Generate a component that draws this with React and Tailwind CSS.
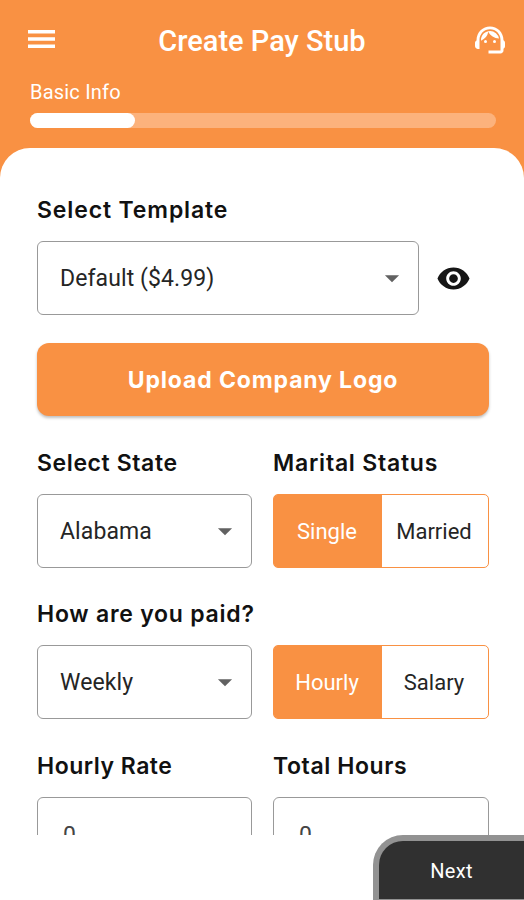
import React, { useState } from "react";
import { MdArrowDropDown, MdSupportAgent, MdVisibility } from "react-icons/md";

const MenuIcon = () => (
  <svg viewBox="0 0 27 18" className="mb-[2px] h-[18px] w-[27px]">
    <path
      d="M0 1.75h27M0 9h27M0 16.25h27"
      stroke="currentColor"
      strokeWidth="3.3"
    />
  </svg>
);

const Label = ({ children, className = "" }) => (
  <div
    className={`h-8 font-['Inter',sans-serif] text-[23px] leading-8 font-semibold whitespace-nowrap text-[#111] ${className}`}
  >
    {children}
  </div>
);

const SelectBox = ({ value, className = "" }) => (
  <button
    className={`flex h-[74px] items-center justify-between rounded-md border border-[#999] pr-[9px] pl-[22px] text-[23px] text-[#252525] ${className}`}
  >
    <span className="pt-0.5 tracking-[0.1px]">{value}</span>
    <MdArrowDropDown className="mb-px size-[34px] text-[#616161]" />
  </button>
);

const Toggle = ({ options, value, onChange }) => (
  <div className="flex h-[74px] rounded-[5px] border border-[#f99143] text-[22px]">
    {options.map((option) => (
      <button
        key={option}
        onClick={() => onChange(option)}
        className={
          option === value
            ? "w-[108px] rounded-l-[3px] bg-[#f99143] pr-0.5 text-white"
            : "flex-1 pr-0.5 text-[#252525]"
        }
      >
        {option}
      </button>
    ))}
  </div>
);

const App = () => {
  const [status, setStatus] = useState("Single");
  const [payType, setPayType] = useState("Hourly");

  return (
    <div className="flex h-[900px] w-[524px] flex-col overflow-hidden bg-white font-['Roboto',sans-serif]">
      <header className="h-[180px] shrink-0 bg-[#f99143] text-white">
        <div className="flex h-20 items-center justify-between pr-4 pl-7">
          <MenuIcon />
          <h1 className="mr-[3px] pt-[3px] text-[29px] font-medium">
            Create Pay Stub
          </h1>
          <MdSupportAgent className="mb-px size-9" />
        </div>
        <div className="pr-7 pl-[30px]">
          <p className="h-[33px] text-[20px] leading-6 tracking-[0.2px]">
            Basic Info
          </p>
          <div className="h-[15px] rounded-full bg-[#fcb27c]">
            <div className="h-full w-[105px] rounded-full bg-white" />
          </div>
        </div>
      </header>

      <main className="-mt-8 h-[687px] shrink-0 overflow-hidden rounded-t-[30px] bg-white pt-[46px] pr-[35px] pl-[37px]">
        <Label className="tracking-[0.87px]">Select Template</Label>
        <div className="mt-[15px] flex items-center gap-[17px]">
          <SelectBox value="Default ($4.99)" className="w-[382px]" />
          <MdVisibility className="size-[35px] text-[#161616]" />
        </div>

        <button className="mt-7 h-[73px] w-full rounded-xl bg-[#f99143] pt-0.5 font-['Inter',sans-serif] text-[23px] font-bold tracking-[0.85px] text-white shadow-[0_2px_3px_rgba(0,0,0,0.25)]">
          Upload Company Logo
        </button>

        <div className="mt-[31px] grid grid-cols-[215px_216px] gap-x-[21px]">
          <Label className="tracking-[0.6px]">Select State</Label>
          <Label className="tracking-[0.77px]">Marital Status</Label>
          <SelectBox value="Alabama" className="mt-[15px]" />
          <div className="mt-[15px]">
            <Toggle
              options={["Single", "Married"]}
              value={status}
              onChange={setStatus}
            />
          </div>
        </div>

        <Label className="mt-[30px] tracking-[0.76px]">How are you paid?</Label>
        <div className="mt-[15px] grid grid-cols-[215px_216px] gap-x-[21px]">
          <SelectBox value="Weekly" />
          <Toggle
            options={["Hourly", "Salary"]}
            value={payType}
            onChange={setPayType}
          />
        </div>

        <div className="mt-[31px] grid grid-cols-[215px_216px] gap-x-[21px]">
          <Label className="tracking-[0.5px]">Hourly Rate</Label>
          <Label className="tracking-[0.59px]">Total Hours</Label>
          <input
            defaultValue="0"
            className="mt-[15px] h-[74px] w-full rounded-md border border-[#999] px-[25px] pt-0.5 text-[23px] text-[#444]"
          />
          <input
            defaultValue="0"
            className="mt-[15px] h-[74px] w-full rounded-md border border-[#999] px-[25px] pt-0.5 text-[23px] text-[#444]"
          />
        </div>
      </main>

      <footer className="flex flex-1 justify-end">
        <button className="w-[151px] rounded-tl-[30px] border-t-[6px] border-b border-l-[6px] border-[#929292] bg-[#303030] pt-0.5 text-[20px] tracking-[0.3px] text-white">
          Next
        </button>
      </footer>
    </div>
  );
};

export default App;
